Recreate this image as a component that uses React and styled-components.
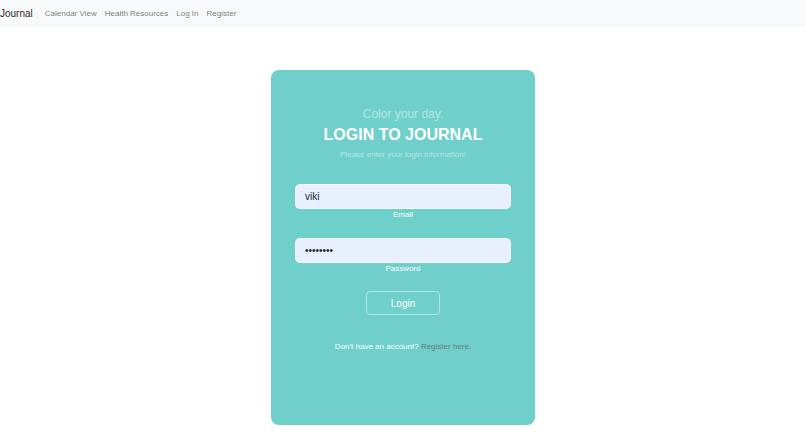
import React from "react";
import styled, { createGlobalStyle } from "styled-components";

const Global = createGlobalStyle`
  html, body { margin: 0; padding: 0; background: #fff; }
  body { font-family: "Liberation Sans", Arial, sans-serif; }
  * { box-sizing: border-box; }
`;

const Navbar = styled.nav`
  height: 27px;
  background: #f8f9fa;
  display: flex;
  align-items: center;
`;

const Brand = styled.a`
  font-size: 10px;
  color: rgba(0, 0, 0, 0.9);
  text-decoration: none;
  margin-right: 8px;
`;

const NavLink = styled.a`
  font-size: 8px;
  color: rgba(0, 0, 0, 0.55);
  text-decoration: none;
  padding: 0 4px;
`;

const Main = styled.main`
  display: flex;
  justify-content: center;
  padding-top: 43px;
`;

const Card = styled.section`
  width: 264px;
  height: 355px;
  background: #6fcfca;
  border-radius: 8px;
  display: flex;
  flex-direction: column;
  align-items: center;
  text-align: center;
`;

const Tagline = styled.p`
  margin: 37px 0 0;
  font-size: 12px;
  line-height: 14px;
  color: rgba(255, 255, 255, 0.5);
`;

const Title = styled.h2`
  margin: 4px 0 0;
  font-size: 16px;
  line-height: 20px;
  font-weight: 700;
  color: #fff;
`;

const Subtitle = styled.p`
  margin: 5px 0 0;
  font-size: 8px;
  line-height: 10px;
  color: rgba(255, 255, 255, 0.5);
`;

const Field = styled.div`
  display: flex;
  flex-direction: column;
  align-items: center;
  margin-top: ${(p) => p.$top}px;
`;

const Input = styled.input`
  width: 216px;
  height: 25px;
  background: #e8f0fe;
  border: 1px solid rgba(255, 255, 255, 0.6);
  border-radius: 5px;
  padding: 0 9px;
  font-family: "Liberation Sans", Arial, sans-serif;
  font-size: 10px;
  color: #212529;
  outline: none;
`;

const Label = styled.label`
  margin-top: 1px;
  font-size: 8px;
  line-height: 10px;
  color: #fff;
`;

const Button = styled.button`
  margin-top: 17px;
  width: 74px;
  height: 24px;
  background: transparent;
  border: 1px solid rgba(255, 255, 255, 0.45);
  border-radius: 4px;
  color: #fff;
  font-family: "Liberation Sans", Arial, sans-serif;
  font-size: 10px;
  cursor: pointer;
`;

const Footer = styled.p`
  margin: 27px 0 0;
  font-size: 8px;
  line-height: 10px;
  color: #fff;
`;

const RegisterLink = styled.a`
  color: #6c7a80;
  text-decoration: none;
`;

export default function App() {
  return (
    <>
      <Global />
      <Navbar>
        <Brand href="#">Journal</Brand>
        <NavLink href="#">Calendar View</NavLink>
        <NavLink href="#">Health Resources</NavLink>
        <NavLink href="#">Log In</NavLink>
        <NavLink href="#">Register</NavLink>
      </Navbar>
      <Main>
        <Card>
          <Tagline>Color your day.</Tagline>
          <Title>LOGIN TO JOURNAL</Title>
          <Subtitle>Please enter your login information!</Subtitle>
          <Field $top={24}>
            <Input type="text" defaultValue="viki" readOnly />
            <Label>Email</Label>
          </Field>
          <Field $top={18}>
            <Input type="password" defaultValue="password" readOnly />
            <Label>Password</Label>
          </Field>
          <Button type="button">Login</Button>
          <Footer>
            Don't have an account? <RegisterLink href="#">Register here.</RegisterLink>
          </Footer>
        </Card>
      </Main>
    </>
  );
}
